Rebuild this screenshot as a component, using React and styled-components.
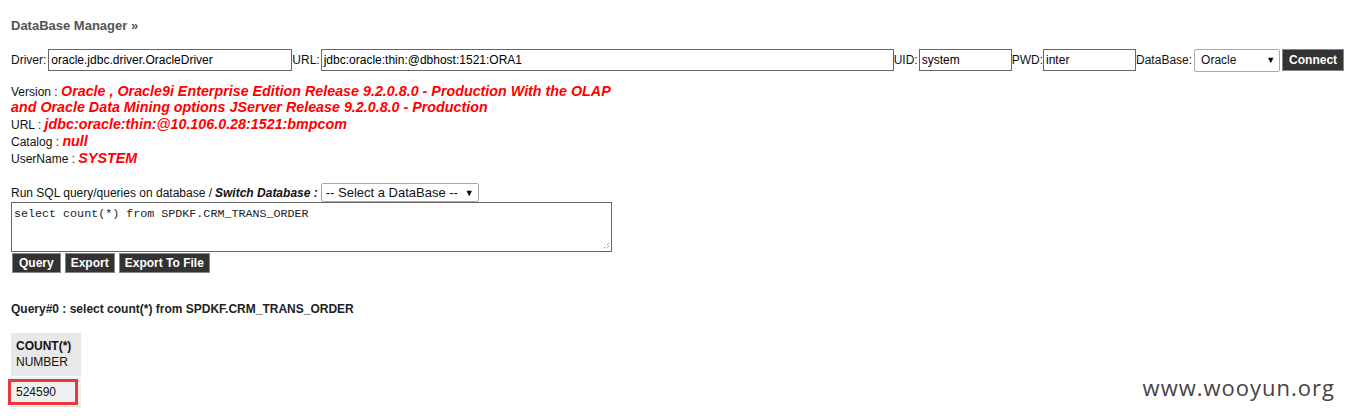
import React from "react";
import styled, { createGlobalStyle } from "styled-components";

const GlobalStyle = createGlobalStyle`
  body {
    margin: 0;
    background: #fff;
    font-family: "Liberation Sans", Arial, sans-serif;
    font-size: 12px;
    color: #111;
  }
`;

const Page = styled.div`
  position: relative;
  width: 1345px;
  height: 417px;
  padding: 18px 0 0 11px;
  box-sizing: border-box;
  overflow: hidden;
`;

const Title = styled.h2`
  margin: 0 0 15px;
  font-size: 13px;
  font-weight: bold;
  color: #555;
  line-height: 16px;
`;

const ConnRow = styled.div`
  display: flex;
  align-items: center;
  height: 22px;
`;

const Label = styled.span`
  font-size: 12px;
  margin-right: ${p => p.$gap ?? 1}px;
`;

const TextInput = styled.div`
  box-sizing: border-box;
  width: ${p => p.$w}px;
  height: 22px;
  border: 1px solid #666;
  padding: 0 2px;
  font-size: 12px;
  line-height: 20px;
  white-space: nowrap;
  overflow: hidden;
  color: #000;
`;

const SelectBox = styled.div`
  box-sizing: border-box;
  display: flex;
  align-items: center;
  justify-content: space-between;
  width: ${p => p.$w}px;
  height: ${p => p.$h}px;
  border: 1px solid #a9a9a9;
  border-radius: 2px;
  padding: 0 4px 0 ${p => p.$pl || 6}px;
  font-size: ${p => p.$fs || 12}px;
  background: #fff;
  white-space: nowrap;
`;

const Arrow = styled.span`
  font-size: 9px;
  color: #000;
`;

const DarkButton = styled.div`
  box-sizing: border-box;
  height: ${p => p.$h || 20}px;
  padding: 0 ${p => p.$px || 5}px;
  margin-left: ${p => p.$ml || 0}px;
  display: flex;
  align-items: center;
  background: #333;
  color: #fff;
  font-weight: bold;
  font-size: 12px;
  border: 1px solid #888;
  white-space: nowrap;
`;

const Info = styled.div`
  margin-top: 13px;
`;

const InfoLine = styled.div`
  font-size: 12px;
  line-height: 16px;
  height: ${p => p.$h || 17}px;
`;

const Value = styled.span`
  color: #f00;
  font-weight: bold;
  font-style: italic;
  font-size: 14.3px;
  line-height: 14px;
`;

const SqlHead = styled.div`
  display: flex;
  align-items: center;
  margin-top: 15px;
  height: 19px;
`;

const Em = styled.b`
  font-style: italic;
  margin: 0 3px 0 3px;
`;

const SqlArea = styled.div`
  position: relative;
  box-sizing: border-box;
  width: 601px;
  height: 50px;
  border: 1px solid #666;
  padding: 4px 2px;
  font-family: "Liberation Mono", "Courier New", monospace;
  font-size: 11.7px;
  color: #222;
`;

const Grip = styled.svg`
  position: absolute;
  right: 1px;
  bottom: 1px;
`;

const Buttons = styled.div`
  display: flex;
  gap: 4px;
  margin-top: 1px;
  padding-left: 1px;
`;

const QueryTitle = styled.div`
  margin-top: 29px;
  font-weight: bold;
  font-size: 12px;
  color: #222;
`;

const ResultTable = styled.table`
  margin-top: 17px;
  border-collapse: collapse;
  font-size: 12px;
`;

const HeadCell = styled.th`
  background: #e8e8e8;
  text-align: left;
  padding: 5px 10px 6px 5px;
  line-height: 16px;
  font-weight: normal;
  color: #111;
  border-bottom: 1px solid #fff;
`;

const DataCell = styled.td`
  background: #f0f0f0;
  padding: 0;
  height: 29px;
  border-bottom: 1px solid #ddd;
`;

const Marked = styled.div`
  box-sizing: border-box;
  width: 70px;
  height: 26px;
  margin-left: -3px;
  border: 3px solid #e8383d;
  padding-left: 5px;
  line-height: 20px;
`;

const Watermark = styled.div`
  position: absolute;
  right: 10px;
  bottom: 15px;
  font-family: "Open Sans", "Noto Sans", sans-serif;
  font-size: 22px;
  letter-spacing: 1px;
  color: #444;
`;

const App = () => (
  <Page>
    <GlobalStyle />
    <Title>DataBase Manager »</Title>
    <ConnRow>
      <Label $gap={2}>Driver:</Label>
      <TextInput $w={244}>oracle.jdbc.driver.OracleDriver</TextInput>
      <Label>URL:</Label>
      <TextInput $w={573}>jdbc:oracle:thin:@dbhost:1521:ORA1</TextInput>
      <Label>UID:</Label>
      <TextInput $w={93}>system</TextInput>
      <Label $gap={0}>PWD:</Label>
      <TextInput $w={93}>inter</TextInput>
      <Label $gap={2}>DataBase:</Label>
      <SelectBox $w={86} $h={23}>
        Oracle <Arrow>▼</Arrow>
      </SelectBox>
      <DarkButton $h={22} $ml={2} $px={6}>Connect</DarkButton>
    </ConnRow>
    <Info>
      <InfoLine $h={33}>
        Version : <Value>Oracle , Oracle9i Enterprise Edition Release 9.2.0.8.0 - Production With the OLAP</Value>
        <br />
        <Value>and Oracle Data Mining options JServer Release 9.2.0.8.0 - Production</Value>
      </InfoLine>
      <InfoLine>
        URL : <Value>jdbc:oracle:thin:@10.106.0.28:1521:bmpcom</Value>
      </InfoLine>
      <InfoLine>
        Catalog : <Value>null</Value>
      </InfoLine>
      <InfoLine>
        UserName : <Value>SYSTEM</Value>
      </InfoLine>
    </Info>
    <SqlHead>
      Run SQL query/queries on database / <Em>Switch Database :</Em>
      <SelectBox $w={158} $h={19} $pl={4} $fs={13}>
        -- Select a DataBase -- <Arrow>▼</Arrow>
      </SelectBox>
    </SqlHead>
    <SqlArea>
      select count(*) from SPDKF.CRM_TRANS_ORDER
      <Grip width="8" height="8" viewBox="0 0 8 8">
        <path d="M7 1L1 7M7 4L4 7" stroke="#777" strokeWidth="1" strokeDasharray="1 1" />
      </Grip>
    </SqlArea>
    <Buttons>
      <DarkButton $px={6}>Query</DarkButton>
      <DarkButton>Export</DarkButton>
      <DarkButton>Export To File</DarkButton>
    </Buttons>
    <QueryTitle>Query#0 : select count(*) from SPDKF.CRM_TRANS_ORDER</QueryTitle>
    <ResultTable>
      <thead>
        <tr>
          <HeadCell>
            <b>COUNT(*)</b>
            <br />
            NUMBER
          </HeadCell>
        </tr>
      </thead>
      <tbody>
        <tr>
          <DataCell>
            <Marked>524590</Marked>
          </DataCell>
        </tr>
      </tbody>
    </ResultTable>
    <Watermark>www.wooyun.org</Watermark>
  </Page>
);

export default App;
